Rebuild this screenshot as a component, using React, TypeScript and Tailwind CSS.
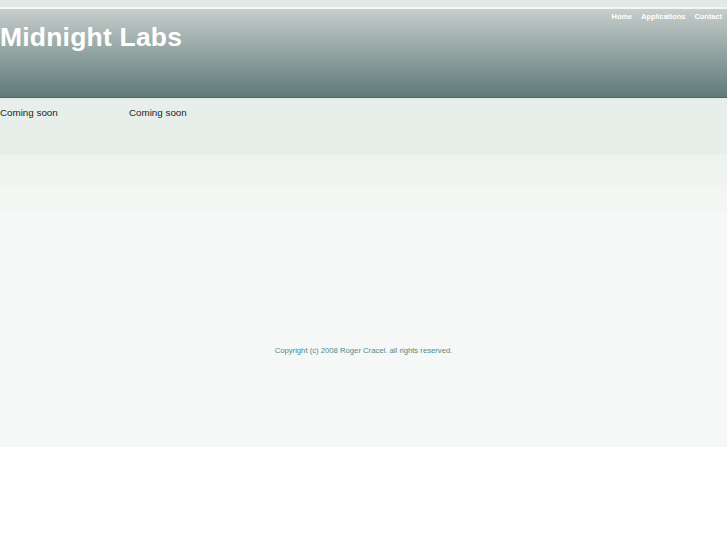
import React from "react";

const navItems = ["Home", "Applications", "Contact"];

export default function App() {
  return (
    <div className="min-h-[545px] bg-white font-['Liberation_Sans',Arial,sans-serif]">
      {/* top strip */}
      <div className="h-[7px] bg-[#e2eae8]" />
      <div className="h-[2px] bg-[#f3f6f3]" />

      {/* header */}
      <header className="h-[89px] bg-gradient-to-b from-[#c6cecc] to-[#5f7b79] border-b border-[#4c6664] flex justify-between">
        <h1 className="text-white font-bold text-[26.5px] leading-none pt-[15px] tracking-[0.2px]">
          Midnight Labs
        </h1>
        <nav className="flex gap-[9px] pr-[5px] pt-[4px] h-fit">
          {navItems.map((item) => (
            <a key={item} href="#" className="text-white font-bold text-[7.4px] leading-none">
              {item}
            </a>
          ))}
        </nav>
      </header>

      {/* content */}
      <div className="bg-[#f6f8f7] h-[349px] flex flex-col">
        <div className="h-[57px] bg-[#e8eeea] flex text-[9.8px] text-[#222] pt-[8px]">
          <div className="w-[129px]">Coming soon</div>
          <div>Coming soon</div>
        </div>
        <div className="h-[30px] bg-[#eef3ef]" />
        <div className="h-[27px] bg-[#f3f6f3]" />
        <footer className="pt-[133px] text-center text-[7.7px] text-[#4f8a89]">
          Copyright (c) 2008 Roger Cracel. all rights reserved.
        </footer>
      </div>
    </div>
  );
}
